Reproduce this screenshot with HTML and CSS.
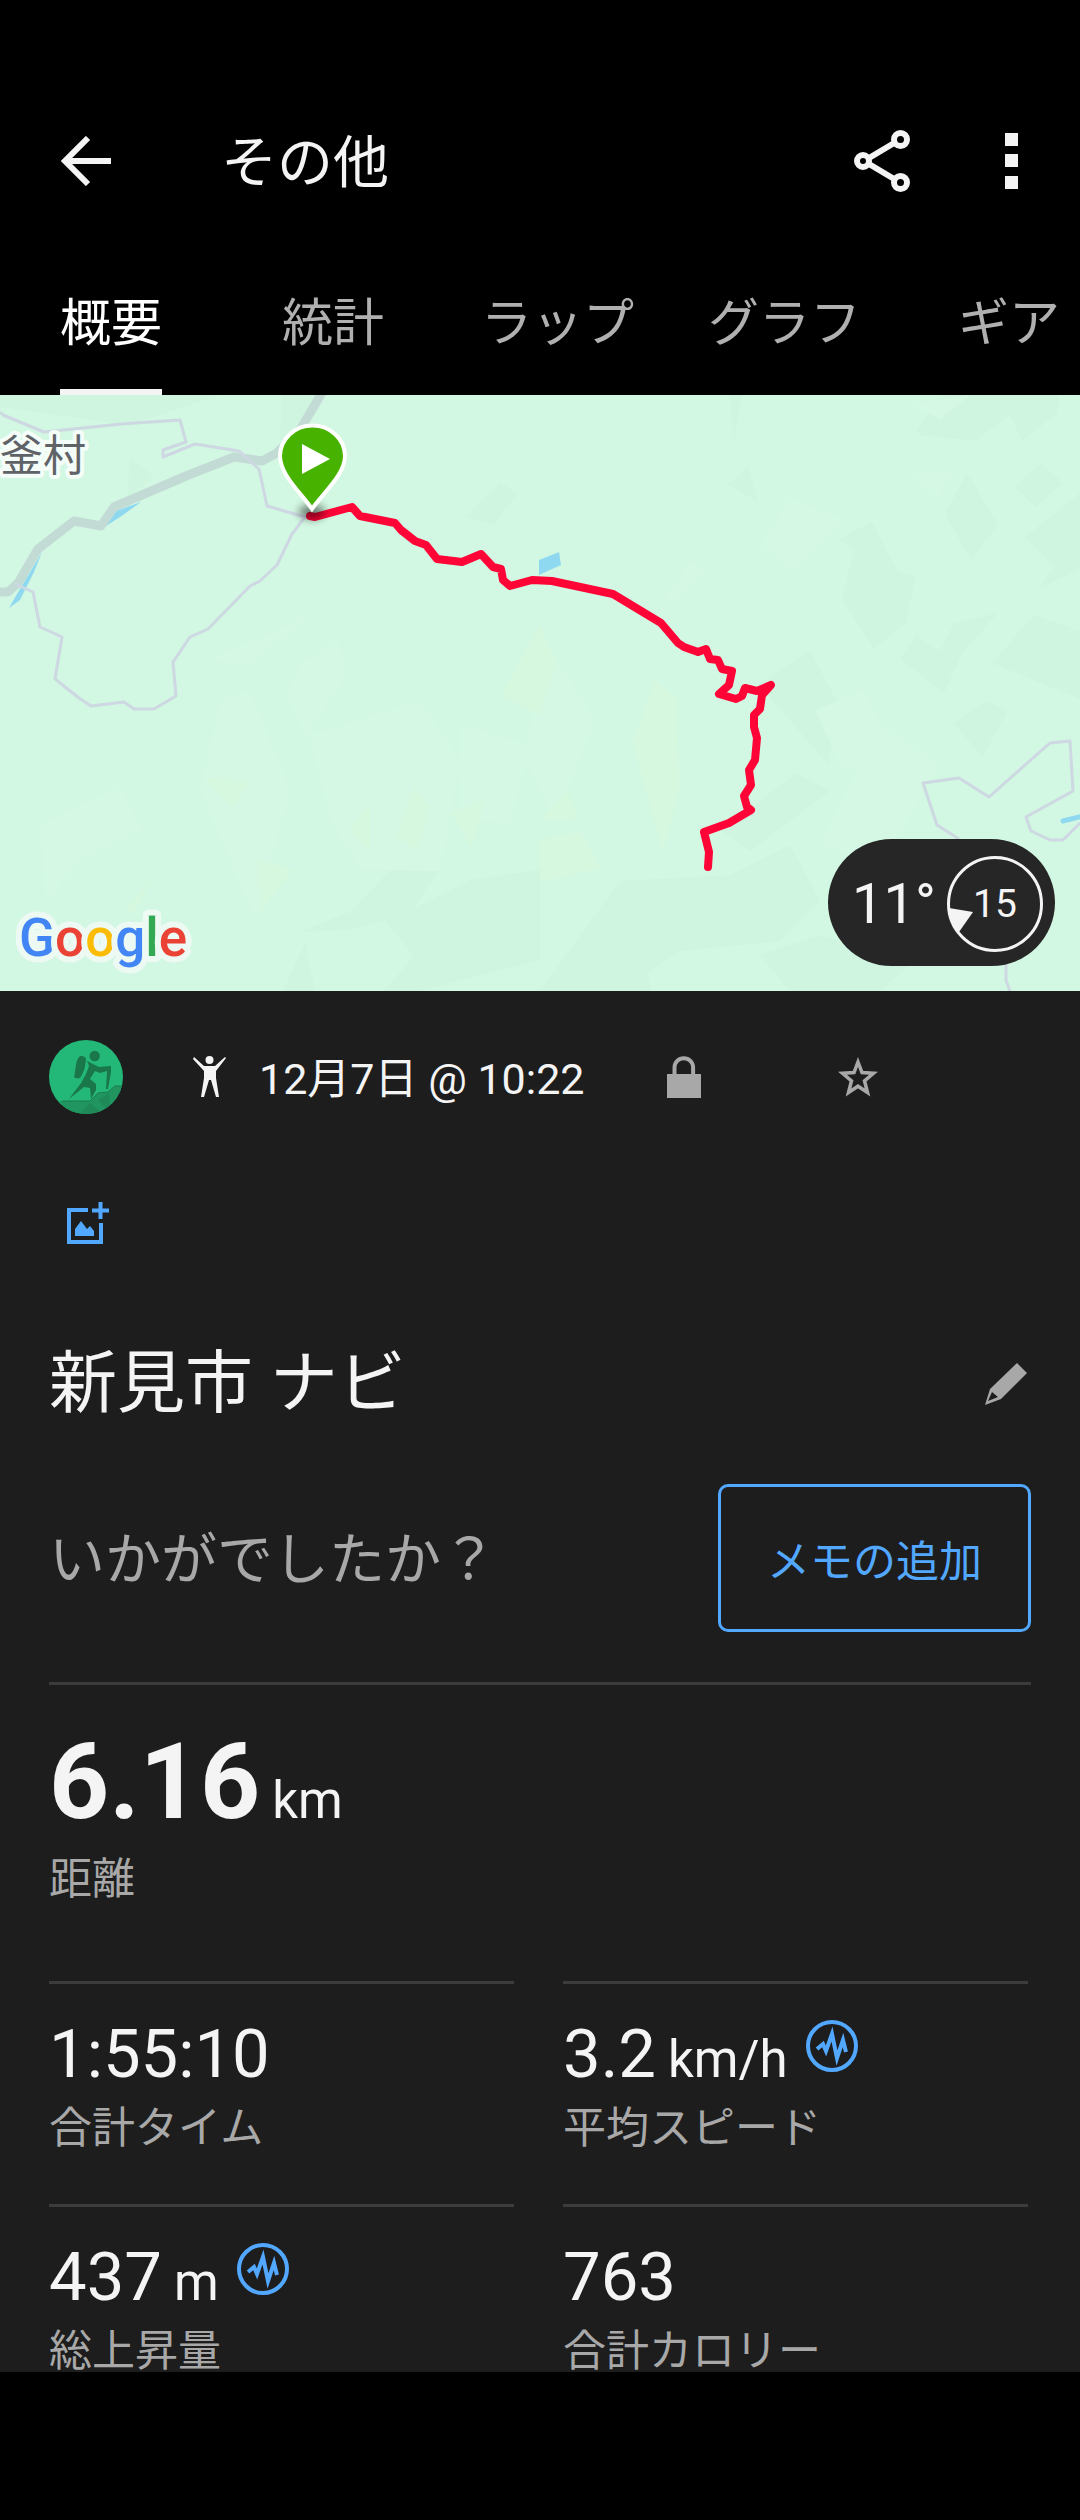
FILE: index.html
```html
<!DOCTYPE html>
<html lang="ja">
<head>
<meta charset="utf-8">
<meta name="viewport" content="width=device-width, initial-scale=1">
<title>その他</title>
<link rel="stylesheet" href="styles.css">
</head>
<body>
<div class="app">
  <header class="appbar">
    <button class="icon-btn" type="button" aria-label="戻る">
      <svg width="50" height="50" viewBox="0 0 50 50" fill="none" stroke="currentColor" stroke-width="6"><path d="M50 25H5M27 2 4 25l23 23"/></svg>
    </button>
    <h1 class="appbar-title">その他</h1>
    <button class="icon-btn" type="button" aria-label="共有">
      <svg width="56" height="62" viewBox="0 0 56 62" fill="none" stroke="currentColor" stroke-width="6"><circle cx="9" cy="31" r="6"/><circle cx="46.500" cy="9.500" r="6.500"/><circle cx="46.500" cy="52.500" r="6.500"/><path d="M15 28 41 12.500M15 34l26 15.500"/></svg>
    </button>
    <button class="icon-btn icon-btn-end" type="button" aria-label="メニュー">
      <svg width="14" height="58" viewBox="0 0 14 58" fill="currentColor"><path d="M0 1h13v13H0zM0 22h13v13H0zM0 44h13v13H0z"/></svg>
    </button>
  </header>
  <nav class="tabs">
    <a class="tab tab-active" href="#summary"><span>概要</span></a>
    <a class="tab" href="#stats"><span>統計</span></a>
    <a class="tab" href="#laps"><span>ラップ</span></a>
    <a class="tab" href="#graph"><span>グラフ</span></a>
    <a class="tab" href="#gear"><span>ギア</span></a>
  </nav>

  <main class="content" id="summary">
    <section class="map" aria-label="地図">
      <svg class="map-canvas" viewBox="0 0 1080 596" preserveAspectRatio="xMidYMid slice">
        <g fill="#cff5e0">
          <path d="M0 0h220l-90 30L0 12zM282 0h40l-22 40-20 6zM130 62l24 20-27 22zM500 88l18 10-25 32-28-8z"/>
          <path d="M942 0h50l-50 42-26-6zM992 0h66v18l-36 28-12-26-34 26-60-6zM729 0h13l-8 46zM748 72l10 34-31-16zM967 78l31 52-27 35-26-46zM1041 68l22 20-27 24-22-20zM1080 98v76l-42 20 16-22-29-30z"/>
          <path d="M872 127l26 50 18 4-10 46-32 27-32-50 12-50-16-10zM1034 220l46 16v68l-88-36zM916 240l24 16 14-28 44-10-36 40-18 40-44-34zM810 255l28 54-10 60-70-80z"/>
          <path d="M796 378l34 18-80 60-28-20zM986 306l22 10-26 46-28-34zM620 486l110-6 60-30 30 56-40 40-100 10-60 40h-80z"/>
          <path d="M400 465l40 8-30 46-62 16-50 2 52-20zM366 501l36 18 68-34 70-10v90l-120 31h-36l30-35zM305 548l10 48h-32zM632 526l20 70h-70zM760 560l60-20 90 30-30 26h-90z"/>
        </g>
        <g fill="#d5f8e4">
          <path d="M340 205l-60 30-70 28 34 8 90-66zM790 103l54 22-52 50-30-24zM690 168l18 8-50 40zM300 270l38-24 8 34-40 60-20-40zM220 305l30-10 40 100-34 130-56-130zM40 430l80-38 22 42-60 30-36 40z"/>
          <path d="M310 340l110-34 40 60-20 110-80-2-30-50zM460 330l70 20-20 80-50-10zM545 245l50 80-40 100-30-60zM815 315l50-20 30 60-52 20zM880 330l60 40-60 100-60-20zM910 10l60-10-30 24zM912 79h40l-14 22z"/>
        </g>
        <g fill="#d6f8de">
          <path d="M205 382l46 6-20 24zM370 408v50l-20-24zM415 392l14 20-12 44-20-16zM452 418l32-12-12 46zM258 465l34 10-30 40zM152 484l-18 34-10 0zM540 230l16 40-16 50-38-20zM655 285l22 20 2 90-16 62-30-110zM540 445l40-8 20 36-60 14zM568 397l10 26-38 2z"/>
        </g>
        <g fill="#8fd9f0">
          <path d="M141 107l-28 10-10 16 20-13zM42 157l-8 20-14 28-11 8 8-14zM539 165l20-8 2 13-22 10z"/>
        </g>
        <g fill="none" stroke-linejoin="round">
          <path stroke="#c3dbd5" stroke-width="9" d="M0 197h8l10-9 20-34 36-28 27 5 13-19 72-31 48-19 28 4 15-8 23-23L323-4"/>
          <path stroke="#cdd8e2" stroke-width="3" d="M0 17l3 3 41 17 77-8 59-4 6 22-23 8v7l32-13 44 7 20 18 8 37 38 11-13 17-15 31-17 16-10 5-42 43-18 8-17 25 3 34-22 13h-20l-10-7-33 4-12-8-24-19 7-42-22-10-7-35-18-8"/>
          <path stroke="#cdd8e2" stroke-width="3" d="M959 444l-22-14-14-42 36-5 30 19 61-54 20-2 3 50-47 26 5 14 19 9h13l17-17M1006 560v25l5 14"/>
          <path stroke="#8fd9f0" stroke-width="5" stroke-linecap="round" d="M1063 426l20-5"/>
        </g>
        <path fill="none" stroke="#ff0437" stroke-width="8" stroke-linejoin="round" stroke-linecap="round" d="M310 121l5 1 37-10 8 9 35 7 6 7 14 11 11 4 11 14 25 3 19-8 12 13 8 2 2 11 7 6 22-6 20 1 61 13 48 29 17 20 6 4 14 5 8-3 4 10 8 1 4 9 10 2-3 14-10 9 17 5 6-3 3-8 12 3 14-6-9 10-2 14-6 6v12l3 11-2 22-6 10 2 15-7 11 3 11 4 3-22 13-25 9 5 20-1 15"/>
        <ellipse class="pin-shadow" cx="312" cy="117" rx="13" ry="7"/>
        <path fill="#47b300" stroke="#fff" stroke-width="4" d="M312 114C302 99 280 80 280 61a32.500 30.500 0 0 1 65 0c0 19-23 38-33 53z"/>
        <path fill="#fff" d="M302 49l28 15-28 15z"/>
        <text class="place" x="0" y="76">釜村</text>
        <text class="brand" x="19" y="561"><tspan fill="#4285f4">G</tspan><tspan fill="#ea4335">o</tspan><tspan fill="#fbbc05">o</tspan><tspan fill="#4285f4">g</tspan><tspan fill="#34a853">l</tspan><tspan fill="#ea4335">e</tspan></text>
      </svg>
      <div class="weather">
        <span class="temp">11°</span>
        <span class="wind">
          <svg class="wind-ring" viewBox="0 0 96 96"><circle cx="48" cy="48" r="46.500" fill="none" stroke="#f4f4f4" stroke-width="3"/><path fill="#f4f4f4" d="M2 52l24 4-14 20C6 70 3 62 2 52z"/></svg>
          <span>15</span>
        </span>
      </div>
    </section>

    <section class="details">
      <div class="meta">
        <svg class="avatar" viewBox="0 0 74 74">
          <defs><clipPath id="disc"><circle cx="37" cy="37" r="37"/></clipPath></defs>
          <g clip-path="url(#disc)">
            <path fill="#24b878" d="M0 0h74v74H0z"/>
            <path fill="#209560" d="M11 61h30l8-8 10-1 7-6h8v28H0z"/>
            <path fill="#1f8a58" d="M31 74l10-11 14 11zM49 60l11-7 2 21z"/>
            <path fill="none" stroke="#1b7d4d" d="M13 61h28l8-8 10-1 7-6h8"/>
            <g fill="#1a7749">
              <circle cx="45.700" cy="16" r="5.200"/>
              <path d="M31 16c4 0 6 1 6 4-1 8-2 12-6 18-3 1-5 0-6-1 2-7 1-17 6-21z"/>
              <path d="M38 21l12 6 12-1v6l-3 17h-2l1-18-7 2-5-2-5 8 6 5v6l-5 9-1-11-6-1-15 12 12-16 5-9 3-8z"/>
            </g>
          </g>
        </svg>
        <svg class="activity" width="34" height="42" viewBox="0 0 34 42" fill="#f4f4f4"><circle cx="16.500" cy="4" r="4"/><path d="M1 1l10 9h11L32 1l1 1-10 13v7l3 19h-3l-5-17h-2l-5 17H8l3-19v-7L0 3z"/></svg>
        <time class="date">12月7日 @ 10:22</time>
        <svg class="lock" width="34" height="42" viewBox="0 0 34 42"><path fill="#a8a8a8" d="M0 18h34v24H0z"/><path fill="none" stroke="#a8a8a8" stroke-width="4" d="M7.500 20v-8.500a9.300 9.300 0 0 1 18.600 0V20"/></svg>
        <button class="icon-btn star" type="button" aria-label="お気に入り">
          <svg width="42" height="40" viewBox="0 0 42 40"><path fill="none" stroke="#a8a8a8" stroke-width="3.500" d="M21 5l4 10.500 11.500.8-9 7.500 3 11.700-9.500-6.300-9.500 6.300 3-11.700-9-7.500L17 15.500z"/></svg>
        </button>
      </div>

      <button class="icon-btn add-photo" type="button" aria-label="写真を追加">
        <svg width="42" height="42" viewBox="0 0 42 42"><path fill="none" stroke="#52a7ff" stroke-width="4" d="M21 8H2v32h32V21M25 8.500h17M33.500 0v17"/><path fill="#52a7ff" d="M8 27l6-8 6 8 3-3 4 5v5H8z"/></svg>
      </button>

      <div class="name-row">
        <h2 class="name">新見市 ナビ</h2>
        <button class="icon-btn" type="button" aria-label="編集">
          <svg width="42" height="42" viewBox="0 0 42 42"><path fill="#a8a8a8" fill-rule="evenodd" d="M32 0l10 10-26 26L0 42l5-16zM7 29l-4 9 10-4z"/></svg>
        </button>
      </div>

      <div class="note-row">
        <p class="prompt">いかがでしたか？</p>
        <button class="note-btn" type="button">メモの追加</button>
      </div>

      <div class="distance">
        <p class="value"><strong>6.16</strong><span class="unit">km</span></p>
        <p class="label">距離</p>
      </div>

      <div class="metrics">
        <div class="metric">
          <p class="value">1:55:10</p>
          <p class="label">合計タイム</p>
        </div>
        <div class="metric">
          <p class="value">3.2<span class="unit">km/h</span>
            <svg class="pulse" viewBox="0 0 52 52"><circle cx="26" cy="26" r="24"/><path d="M11 29l6-5 3 7 6-17 5 24 6-18 3 12"/></svg></p>
          <p class="label">平均スピード</p>
        </div>
        <div class="metric">
          <p class="value">437<span class="unit">m</span>
            <svg class="pulse" viewBox="0 0 52 52"><circle cx="26" cy="26" r="24"/><path d="M11 29l6-5 3 7 6-17 5 24 6-18 3 12"/></svg></p>
          <p class="label">総上昇量</p>
        </div>
        <div class="metric">
          <p class="value">763</p>
          <p class="label">合計カロリー</p>
        </div>
      </div>
    </section>
  </main>
  <div class="system-bar"></div>
</div>
</body>
</html>
```
FILE: styles.css
```css
* {
  box-sizing: border-box;
}

body,
h1,
h2,
p {
  margin: 0;
  font-weight: 400;
}

body {
  background: #000;
  color: #f4f4f4;
  font-family: Roboto, "Noto Sans CJK JP", sans-serif;
}

.app {
  display: flex;
  flex-direction: column;
  height: 100vh;
  padding-top: 76px;
}

.icon-btn {
  display: flex;
  flex: none;
  padding: 0;
  border: 0;
  background: none;
  color: inherit;
}

/* Top bar */
.appbar {
  display: flex;
  flex: none;
  align-items: center;
  height: 170px;
  padding: 0 61px;
}

.appbar-title {
  flex: 1;
  margin-left: 110px;
  padding-top: 4px;
  font-size: 56px;
  line-height: 80px;
}

.icon-btn-end {
  margin-left: 95px;
}

.tabs {
  display: flex;
  flex: none;
  height: 149px;
  overflow: hidden;
}

.tab {
  display: flex;
  flex: none;
  justify-content: center;
  min-width: 222px;
  padding: 0 37px;
  color: #b0b0b0;
  font-size: 51px;
  line-height: 155px;
  text-decoration: none;
}

.tab-active {
  color: #fff;
}

.tab-active span {
  border-bottom: 6px solid #f4f4f4;
  height: 149px;
}

/* Scrolling area */
.content {
  flex: 1;
  min-height: 0;
  overflow-y: auto;
  scrollbar-width: none;
  background: #1d1d1d;
}

.map {
  position: relative;
  height: 596px;
  background: #d2f7e2;
}

.map-canvas {
  display: block;
  width: 100%;
  height: 100%;
}

.pin-shadow {
  fill: #000;
  opacity: 0.5;
  filter: blur(4px);
}

.place {
  fill: #5f6368;
  stroke: #f4fdf8;
  stroke-width: 8px;
  stroke-linejoin: round;
  paint-order: stroke;
  font-size: 43px;
}

.brand {
  stroke: #edfaf3;
  stroke-width: 12px;
  stroke-linejoin: round;
  paint-order: stroke;
  font-size: 53px;
  font-weight: 500;
}

.weather {
  position: absolute;
  right: 25px;
  bottom: 25px;
  display: flex;
  align-items: center;
  justify-content: space-between;
  width: 227px;
  height: 127px;
  padding: 2px 12px 0 24px;
  border-radius: 64px;
  background: #262626;
}

.temp {
  font-size: 56px;
  line-height: 64px;
}

.wind {
  display: grid;
  place-items: center;
  font-size: 39px;
  line-height: 48px;
}

.wind > * {
  grid-area: 1 / 1;
}

.wind-ring {
  width: 96px;
  height: 96px;
}

/* Activity details */
.details {
  padding: 49px 49px 0;
}

.meta {
  display: flex;
  align-items: center;
}

.avatar {
  width: 74px;
  height: 74px;
}

.activity {
  margin-left: 70px;
}

.date {
  margin-left: 32px;
  padding-top: 4px;
  font-size: 43px;
  line-height: 64px;
}

.lock {
  margin-left: 82px;
}

.star {
  margin-left: 136px;
}

.add-photo {
  margin: 88px 0 0 18px;
}

.name-row {
  display: flex;
  align-items: center;
  justify-content: space-between;
  margin-top: 90px;
  padding-right: 4px;
}

.name {
  font-size: 68px;
  line-height: 100px;
}

.note-row {
  display: flex;
  align-items: center;
  justify-content: space-between;
  margin-top: 50px;
  padding-bottom: 50px;
  border-bottom: 3px solid #3c3c3c;
}

.prompt {
  padding-top: 4px;
  color: #a8a8a8;
  font-size: 56px;
  line-height: 80px;
}

.note-btn {
  height: 148px;
  padding: 0 46px;
  border: 3px solid #52a7ff;
  border-radius: 10px;
  background: none;
  color: #52a7ff;
  font: inherit;
  font-size: 43px;
}

.distance {
  padding: 36px 0 68px;
}

.value {
  display: flex;
  align-items: baseline;
  gap: 12px;
  font-size: 67px;
  line-height: 80px;
}

.value strong {
  font-size: 105px;
  font-weight: 700;
  line-height: 124px;
}

.unit {
  font-size: 51px;
  line-height: 60px;
}

.label {
  color: #a8a8a8;
  font-size: 43px;
  line-height: 68px;
}

.metrics {
  display: grid;
  grid-template-columns: 1fr 1fr;
  column-gap: 49px;
  padding-right: 3px;
}

.metric {
  padding: 30px 0 42px;
  border-top: 3px solid #3c3c3c;
}

.pulse {
  align-self: flex-start;
  width: 52px;
  height: 52px;
  margin: 6px 0 0 6px;
  fill: none;
  stroke: #52a7ff;
  stroke-width: 4px;
}

.system-bar {
  flex: none;
  height: 148px;
}
```
